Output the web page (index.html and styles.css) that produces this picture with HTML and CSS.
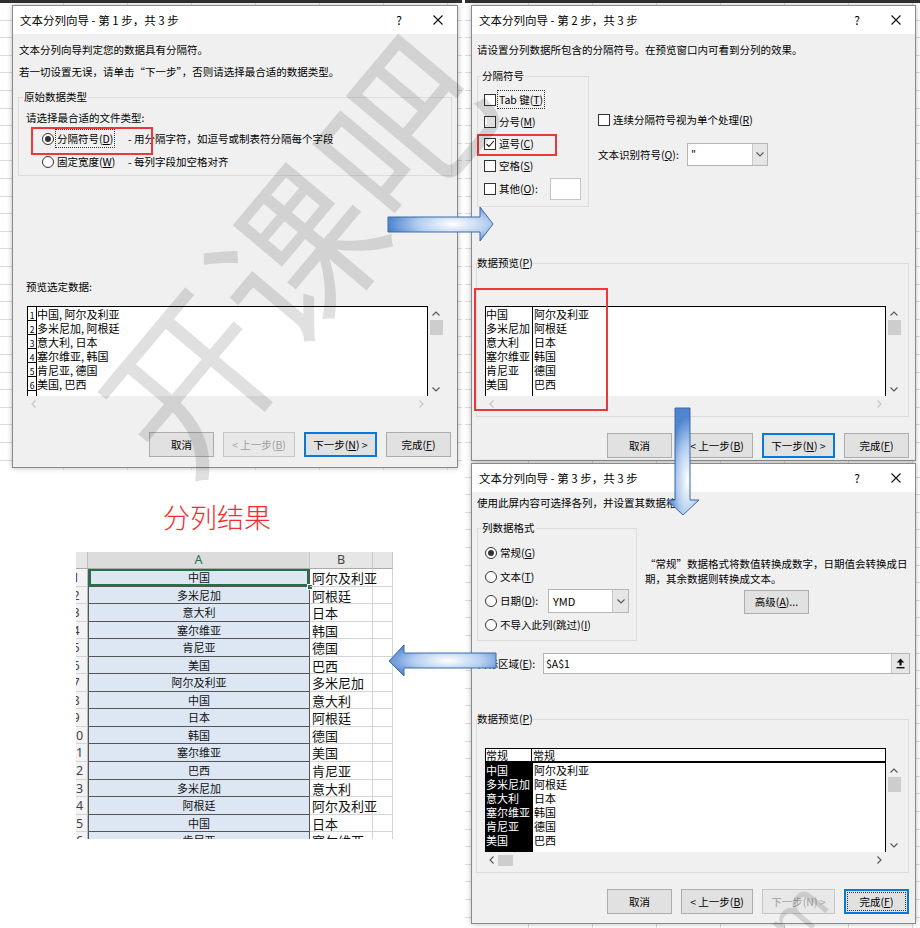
FILE: index.html
```html
<!DOCTYPE html>
<html lang="zh-CN">
<head>
<meta charset="utf-8">
<title>文本分列向导</title>
<link rel="stylesheet" href="styles.css">
</head>
<body>
<div class="canvas">
  <div class="shot shot1"></div>
  <div class="shot shot2"></div>
  <div class="shot shot3"></div>

  <!-- ============ Step 1 ============ -->
  <section class="dialog d1">
    <header class="titlebar">
      <span class="tt">文本分列向导 - 第 1 步，共 3 步</span>
      <span class="tb-q">?</span>
      <span class="tb-x"><svg width="10" height="10" viewBox="0 0 10 10"><path d="M0.5 0.5 L9.5 9.5 M9.5 0.5 L0.5 9.5" stroke="#111" stroke-width="1.1" fill="none"/></svg></span>
    </header>
    <div class="dbody">
      <p class="line l1">文本分列向导判定您的数据具有分隔符。</p>
      <p class="line l2">若一切设置无误，请单击“下一步”，否则请选择最合适的数据类型。</p>
      <fieldset class="grp g1">
        <legend>原始数据类型</legend>
        <div class="hint">请选择最合适的文件类型:</div>
        <div class="opt">
          <span class="radio on"></span>
          <span class="olbl"><span class="focus">分隔符号(<u>D</u>)</span></span>
          <span>- 用分隔字符，如逗号或制表符分隔每个字段</span>
        </div>
        <div class="opt">
          <span class="radio"></span>
          <span class="olbl">固定宽度(<u>W</u>)</span>
          <span>- 每列字段加空格对齐</span>
        </div>
      </fieldset>
      <div class="plabel">预览选定数据:</div>
      <div class="pv">
        <div class="pbox pb1">
          <div class="nrow"><span class="pn">1</span><span>中国, 阿尔及利亚</span></div>
          <div class="nrow"><span class="pn">2</span><span>多米尼加, 阿根廷</span></div>
          <div class="nrow"><span class="pn">3</span><span>意大利, 日本</span></div>
          <div class="nrow"><span class="pn">4</span><span>塞尔维亚, 韩国</span></div>
          <div class="nrow"><span class="pn">5</span><span>肯尼亚, 德国</span></div>
          <div class="nrow"><span class="pn">6</span><span>美国, 巴西</span></div>
          <div class="nrow"><span class="pn"></span><span></span></div>
        </div>
        <div class="vs">
          <span class="sa"><svg width="8" height="5" viewBox="0 0 8 5"><path d="M0.5 4.5 L4 1 L7.5 4.5" fill="none" stroke="#555" stroke-width="1.1"/></svg></span>
          <span class="thumb"></span>
          <span class="sa end"><svg width="8" height="5" viewBox="0 0 8 5"><path d="M0.5 0.5 L4 4 L7.5 0.5" fill="none" stroke="#555" stroke-width="1.1"/></svg></span>
        </div>
        <div class="hs light">
          <span class="ha"><svg width="5" height="8" viewBox="0 0 5 8"><path d="M4.5 0.5 L1 4 L4.5 7.5" fill="none" stroke="#c4c4c4" stroke-width="1.1"/></svg></span>
          <span class="ha end"><svg width="5" height="8" viewBox="0 0 5 8"><path d="M0.5 0.5 L4 4 L0.5 7.5" fill="none" stroke="#c4c4c4" stroke-width="1.1"/></svg></span>
        </div>
      </div>
      <div class="btns">
        <span class="btn w65">取消</span>
        <span class="btn w72 dis">&lt; 上一步(<u>B</u>)</span>
        <span class="btn w73 def">下一步(<u>N</u>) &gt;</span>
        <span class="btn w65">完成(<u>F</u>)</span>
      </div>
    </div>
  </section>

  <!-- ============ Step 2 ============ -->
  <section class="dialog d2">
    <header class="titlebar">
      <span class="tt">文本分列向导 - 第 2 步，共 3 步</span>
      <span class="tb-q">?</span>
      <span class="tb-x"><svg width="10" height="10" viewBox="0 0 10 10"><path d="M0.5 0.5 L9.5 9.5 M9.5 0.5 L0.5 9.5" stroke="#111" stroke-width="1.1" fill="none"/></svg></span>
    </header>
    <div class="dbody">
      <p class="line l1">请设置分列数据所包含的分隔符号。在预览窗口内可看到分列的效果。</p>
      <div class="row2">
        <fieldset class="grp g2">
          <legend>分隔符号</legend>
          <div class="chk"><span class="box"></span><span class="clbl"><span class="focus">Tab 键(<u>T</u>)</span></span></div>
          <div class="chk"><span class="box"></span><span class="clbl">分号(<u>M</u>)</span></div>
          <div class="chk"><span class="box"><svg width="10" height="10" viewBox="0 0 10 10"><path d="M1.5 5 L4 7.5 L8.8 2" fill="none" stroke="#111" stroke-width="1.1"/></svg></span><span class="clbl">逗号(<u>C</u>)</span></div>
          <div class="chk"><span class="box"></span><span class="clbl">空格(<u>S</u>)</span></div>
          <div class="chk other"><span class="box"></span><span class="clbl olb">其他(<u>O</u>):</span><span class="tbox"></span></div>
        </fieldset>
        <div class="rcol2">
          <div class="chk cons"><span class="box"></span><span class="clbl">连续分隔符号视为单个处理(<u>R</u>)</span></div>
          <div class="qrow">
            <span class="qlbl">文本识别符号(<u>Q</u>):</span>
            <span class="combo cq"><span class="cv">"</span><span class="cbtn"><svg width="8" height="5" viewBox="0 0 8 5"><path d="M0.5 0.5 L4 4 L7.5 0.5" fill="none" stroke="#555" stroke-width="1.1"/></svg></span></span>
          </div>
        </div>
      </div>
      <fieldset class="grp gpv gpv2">
        <legend>数据预览(<u>P</u>)</legend>
        <div class="pv">
          <div class="pbox pb2">
            <div class="pc1">中国<br>多米尼加<br>意大利<br>塞尔维亚<br>肯尼亚<br>美国</div>
            <div class="pc2">阿尔及利亚<br>阿根廷<br>日本<br>韩国<br>德国<br>巴西</div>
          </div>
          <div class="vs">
            <span class="sa"><svg width="8" height="5" viewBox="0 0 8 5"><path d="M0.5 4.5 L4 1 L7.5 4.5" fill="none" stroke="#555" stroke-width="1.1"/></svg></span>
            <span class="thumb"></span>
            <span class="sa end"><svg width="8" height="5" viewBox="0 0 8 5"><path d="M0.5 0.5 L4 4 L7.5 0.5" fill="none" stroke="#555" stroke-width="1.1"/></svg></span>
          </div>
          <div class="hs">
            <span class="ha"><svg width="5" height="8" viewBox="0 0 5 8"><path d="M4.5 0.5 L1 4 L4.5 7.5" fill="none" stroke="#c4c4c4" stroke-width="1.1"/></svg></span>
            <span class="ha end"><svg width="5" height="8" viewBox="0 0 5 8"><path d="M0.5 0.5 L4 4 L0.5 7.5" fill="none" stroke="#c4c4c4" stroke-width="1.1"/></svg></span>
          </div>
        </div>
      </fieldset>
      <div class="btns b2">
        <span class="btn w65">取消</span>
        <span class="btn w72">&lt; 上一步(<u>B</u>)</span>
        <span class="btn w73 def">下一步(<u>N</u>) &gt;</span>
        <span class="btn w65">完成(<u>F</u>)</span>
      </div>
    </div>
  </section>

  <!-- ============ Step 3 ============ -->
  <section class="dialog d3">
    <header class="titlebar">
      <span class="tt">文本分列向导 - 第 3 步，共 3 步</span>
      <span class="tb-q">?</span>
      <span class="tb-x"><svg width="10" height="10" viewBox="0 0 10 10"><path d="M0.5 0.5 L9.5 9.5 M9.5 0.5 L0.5 9.5" stroke="#111" stroke-width="1.1" fill="none"/></svg></span>
    </header>
    <div class="dbody">
      <p class="line l1">使用此屏内容可选择各列，并设置其数据格式。</p>
      <div class="row3">
        <fieldset class="grp g3">
          <legend>列数据格式</legend>
          <div class="ropt"><span class="radio on"></span><span class="rl">常规(<u>G</u>)</span></div>
          <div class="ropt"><span class="radio"></span><span class="rl">文本(<u>T</u>)</span></div>
          <div class="ropt"><span class="radio"></span><span class="rl dl">日期(<u>D</u>):</span>
            <span class="combo cd"><span class="cv">YMD</span><span class="cbtn"><svg width="8" height="5" viewBox="0 0 8 5"><path d="M0.5 0.5 L4 4 L7.5 0.5" fill="none" stroke="#555" stroke-width="1.1"/></svg></span></span>
          </div>
          <div class="ropt"><span class="radio"></span><span class="rl">不导入此列(跳过)(<u>I</u>)</span></div>
        </fieldset>
        <div class="rcol3">
          <p class="desc">“常规”数据格式将数值转换成数字，日期值会转换成日<br>期，其余数据则转换成文本。</p>
          <span class="btn adv">高级(<u>A</u>)...</span>
        </div>
      </div>
      <div class="target">
        <span class="tlbl">目标区域(<u>E</u>):</span>
        <span class="tinput"><span class="tv">$A$1</span><span class="tbtn"><svg width="9" height="11" viewBox="0 0 9 11"><path d="M4.5 0.5 L8.3 4.6 L5.6 4.6 L5.6 7.4 L3.4 7.4 L3.4 4.6 L0.7 4.6 Z" fill="#111"/><rect x="0.5" y="9" width="8" height="1.4" fill="#111"/></svg></span></span>
      </div>
      <fieldset class="grp gpv gpv3">
        <legend>数据预览(<u>P</u>)</legend>
        <div class="pv pv3">
          <div class="phead"><span class="ph1">常规</span><span class="ph2">常规</span></div>
          <div class="pblank"></div>
          <div class="pbox pb3">
            <div class="pc1 blk">中国<br>多米尼加<br>意大利<br>塞尔维亚<br>肯尼亚<br>美国</div>
            <div class="pc2">阿尔及利亚<br>阿根廷<br>日本<br>韩国<br>德国<br>巴西</div>
          </div>
          <div class="vs">
            <span class="sa"><svg width="8" height="5" viewBox="0 0 8 5"><path d="M0.5 4.5 L4 1 L7.5 4.5" fill="none" stroke="#555" stroke-width="1.1"/></svg></span>
            <span class="thumb t3"></span>
            <span class="sa end"><svg width="8" height="5" viewBox="0 0 8 5"><path d="M0.5 0.5 L4 4 L7.5 0.5" fill="none" stroke="#555" stroke-width="1.1"/></svg></span>
          </div>
          <div class="hs">
            <span class="ha"><svg width="5" height="8" viewBox="0 0 5 8"><path d="M4.5 0.5 L1 4 L4.5 7.5" fill="none" stroke="#555" stroke-width="1.1"/></svg></span>
            <span class="hthumb"></span>
            <span class="ha end"><svg width="5" height="8" viewBox="0 0 5 8"><path d="M0.5 0.5 L4 4 L0.5 7.5" fill="none" stroke="#555" stroke-width="1.1"/></svg></span>
          </div>
        </div>
      </fieldset>
      <div class="btns b3">
        <span class="btn w65">取消</span>
        <span class="btn w72">&lt; 上一步(<u>B</u>)</span>
        <span class="btn w73 dis">下一步(N) &gt;</span>
        <span class="btn w65 def focusbtn">完成(<u>F</u>)</span>
      </div>
    </div>
  </section>

  <!-- ============ Result sheet ============ -->
  <h2 class="result-title">分列结果</h2>
  <div class="sheet">
    <div class="corner"></div><div class="ch sel">A</div><div class="ch">B</div><div class="ch"></div>
    <div class="rh"><span>1</span></div><div class="ca act">中国<i class="handle"></i></div><div class="cbv">阿尔及利亚</div><div class="cc"></div>
    <div class="rh"><span>2</span></div><div class="ca">多米尼加</div><div class="cbv">阿根廷</div><div class="cc"></div>
    <div class="rh"><span>3</span></div><div class="ca">意大利</div><div class="cbv">日本</div><div class="cc"></div>
    <div class="rh"><span>4</span></div><div class="ca">塞尔维亚</div><div class="cbv">韩国</div><div class="cc"></div>
    <div class="rh"><span>5</span></div><div class="ca">肯尼亚</div><div class="cbv">德国</div><div class="cc"></div>
    <div class="rh"><span>6</span></div><div class="ca">美国</div><div class="cbv">巴西</div><div class="cc"></div>
    <div class="rh"><span>7</span></div><div class="ca">阿尔及利亚</div><div class="cbv">多米尼加</div><div class="cc"></div>
    <div class="rh"><span>8</span></div><div class="ca">中国</div><div class="cbv">意大利</div><div class="cc"></div>
    <div class="rh"><span>9</span></div><div class="ca">日本</div><div class="cbv">阿根廷</div><div class="cc"></div>
    <div class="rh"><span>10</span></div><div class="ca">韩国</div><div class="cbv">德国</div><div class="cc"></div>
    <div class="rh"><span>11</span></div><div class="ca">塞尔维亚</div><div class="cbv">美国</div><div class="cc"></div>
    <div class="rh"><span>12</span></div><div class="ca">巴西</div><div class="cbv">肯尼亚</div><div class="cc"></div>
    <div class="rh"><span>13</span></div><div class="ca">多米尼加</div><div class="cbv">意大利</div><div class="cc"></div>
    <div class="rh"><span>14</span></div><div class="ca">阿根廷</div><div class="cbv">阿尔及利亚</div><div class="cc"></div>
    <div class="rh"><span>15</span></div><div class="ca">中国</div><div class="cbv">日本</div><div class="cc"></div>
    <div class="rh"><span>16</span></div><div class="ca">肯尼亚</div><div class="cbv">塞尔维亚</div><div class="cc"></div>
  </div>

  <!-- ============ Annotations ============ -->
  <div class="redbox rb1"></div>
  <div class="redbox rb2"></div>
  <div class="redbox rb3"></div>

  <svg class="arrow ar-right" width="107" height="37" viewBox="0 0 107 37">
    <defs><radialGradient id="gr1" cx="0.62" cy="0.5" r="0.62"><stop offset="0" stop-color="#ffffff"/><stop offset="0.55" stop-color="#b3cdf0"/><stop offset="1" stop-color="#4f84cf"/></radialGradient></defs>
    <polygon points="1,11 93,11 93,1 106,18 93,35 93,26 1,26" fill="url(#gr1)" stroke="#3d6aa8" stroke-width="1"/>
  </svg>
  <svg class="arrow ar-down" width="34" height="110" viewBox="0 0 34 110">
    <defs><radialGradient id="gr2" cx="0.65" cy="0.68" r="0.6"><stop offset="0" stop-color="#ffffff"/><stop offset="0.55" stop-color="#b3cdf0"/><stop offset="1" stop-color="#4f84cf"/></radialGradient></defs>
    <polygon points="9,1 24,1 24,93 33,93 17,108 1,93 9,93" fill="url(#gr2)" stroke="#3d6aa8" stroke-width="1"/>
  </svg>
  <svg class="arrow ar-left" width="110" height="33" viewBox="0 0 110 33">
    <defs><radialGradient id="gr3" cx="0.55" cy="0.5" r="0.6"><stop offset="0" stop-color="#ffffff"/><stop offset="0.55" stop-color="#b3cdf0"/><stop offset="1" stop-color="#4f84cf"/></radialGradient></defs>
    <polygon points="1,17 16,1 16,9 108,9 108,24 16,24 16,32" fill="url(#gr3)" stroke="#3d6aa8" stroke-width="1"/>
  </svg>

  <div class="wm">开课吧</div>
  <div class="wm wm2">m</div>
</div>
</body>
</html>
```

FILE: styles.css
```css
:root {
  --ui: "Noto Sans CJK SC", "Noto Sans", sans-serif;
}
* { box-sizing: border-box; }
html, body { margin: 0; padding: 0; }
body { background: #fff; font-family: var(--ui); color: #000; }
u { text-decoration: underline; text-underline-offset: 1px; }

.canvas {
  position: relative;
  width: 920px;
  height: 928px;
  overflow: hidden;
  background: #fff;
}

/* screenshot backdrops (Excel grid behind each dialog) */
.shot {
  position: absolute;
  background-color: #fff;
  background-image:
    repeating-linear-gradient(to bottom, transparent 0, transparent 16.6px, #dcdcdc 16.6px, #dcdcdc 17.6px),
    repeating-linear-gradient(to right, transparent 0, transparent 63px, #dcdcdc 63px, #dcdcdc 64px);
}
.shot1 { left: 0; top: 0; width: 462px; height: 470px; border-top: 3px solid #2f2f2f; }
.shot2 { left: 465px; top: 0; width: 455px; height: 462px; border-top: 3px solid #2f2f2f; }
.shot3 { left: 465px; top: 460px; width: 455px; height: 468px; }

/* dialogs */
.dialog {
  position: absolute;
  display: flex;
  flex-direction: column;
  background: #f0f0f0;
  border: 1px solid #8a8a8a;
  box-shadow: 0 0 5px rgba(0, 0, 0, 0.28);
  font-size: 10.5px;
  line-height: 16px;
}
.d1 { left: 12px; top: 5px; width: 446px; height: 463px; }
.d2 { left: 471px; top: 5px; width: 445px; height: 456px; }
.d3 { left: 471px; top: 463px; width: 445px; height: 461px; }

.titlebar {
  flex: none;
  height: 28px;
  background: #fff;
  display: flex;
  align-items: center;
  padding-left: 7px;
  font-size: 11.5px;
}
.titlebar .tt { flex: 1; white-space: nowrap; }
.tb-q { width: 40px; text-align: center; font-size: 12px; }
.tb-x { width: 38px; display: flex; justify-content: center; align-items: center; }

.dbody { flex: 1; display: flex; flex-direction: column; }
.line { margin: 0; line-height: 20px; padding-left: 5px; white-space: nowrap; }
.d1 .line { padding-left: 6px; }
.d1 .l1 { margin-top: 6px; }
.d1 .l2 { margin-top: 2px; }
.d2 .l1 { margin-top: 6px; }
.d3 .l1 { margin-top: 1px; }

/* group boxes */
.grp { margin: 0; border: 1px solid #dcdcdc; min-width: 0; }
.grp legend { padding: 0 1px; line-height: 16px; font-size: 10.5px; }

.g1 { margin: 7px 0 0 5px; width: 434px; padding: 0 0 3px 4px; }
.hint { margin: 5px 0 0 3px; line-height: 16px; }
.opt { display: flex; align-items: center; height: 20px; margin-top: 3px; padding-left: 19px; white-space: nowrap; }
.olbl { width: 71px; margin-left: 3px; flex: none; }
.focus { outline: 1px dotted #333; outline-offset: 1px; }

.radio {
  width: 12px; height: 12px; flex: none;
  border: 1px solid #333; border-radius: 50%;
  background: #fff;
  display: flex; align-items: center; justify-content: center;
}
.radio.on::after { content: ""; width: 6px; height: 6px; border-radius: 50%; background: #333; }

.plabel { margin-top: 103px; padding-left: 13px; line-height: 16px; }

/* preview list with scroll bars */
.pv {
  display: grid;
  grid-template-columns: 401px 16px;
  grid-template-rows: 90px 16px;
}
.d1 .pv { margin: 11px 0 0 14px; }
.pbox {
  background: #fff;
  border: 1px solid #000;
  border-bottom: 0;
  overflow: hidden;
  font-size: 11px;
  line-height: 14px;
  white-space: nowrap;
}
.nrow { display: flex; height: 14px; }
.pn {
  width: 9px; flex: none;
  border-right: 1px solid #000; border-bottom: 1px solid #000;
  font-size: 8.5px; line-height: 9px;
  display: flex; align-items: flex-end; justify-content: center;
}
.vs { display: flex; flex-direction: column; }
.sa { height: 14px; display: flex; align-items: center; justify-content: center; }
.sa.end { margin-top: auto; }
.thumb { width: 13px; height: 15px; margin-left: 2px; background: #cdcdcd; }
.hs { display: flex; align-items: center; }
.ha { width: 13px; height: 16px; display: flex; align-items: center; justify-content: center; }
.ha.end { margin-left: auto; width: 14px; }
.hthumb { width: 15px; height: 11px; background: #cdcdcd; }

.pb2, .pb3 { display: flex; }
.pc1 { width: 47px; flex: none; border-right: 1px solid #000; }
.pc2 { padding-left: 1px; }
.blk { background: #000; color: #fff; }

/* buttons */
.btns { display: flex; justify-content: flex-end; gap: 9px; padding-right: 6px; margin-top: 20px; }
.b2, .b3 { margin-top: 16px; }
.btn {
  height: 25px;
  border: 1px solid #adadad;
  background: #e1e1e1;
  display: flex; align-items: center; justify-content: center;
  font-size: 10.5px;
  white-space: nowrap;
}
.w65 { width: 65px; }
.w72 { width: 72px; }
.w73 { width: 73px; }
.btn.def { border: 2px solid #0a78d7; }
.btn.dis { color: #a0a0a0; border-color: #c6c6c6; background: #e8e8e8; }
.btn.focusbtn { outline: 1px dotted #333; outline-offset: -4px; }

/* step 2 */
.row2 { display: flex; margin: 8px 0 0 5px; }
.g2 { width: 112px; padding: 0 0 6px 3px; flex: none; }
.chk { display: flex; align-items: center; height: 22px; white-space: nowrap; }
.g2 .chk:first-of-type { margin-top: 5px; }
.g2 .chk.other { margin-top: 1px; }
.box {
  width: 12px; height: 12px; flex: none;
  margin-left: 3px;
  border: 1px solid #333; background: #fff;
  display: flex; align-items: center; justify-content: center;
}
.clbl { margin-left: 3px; }
.olb { width: 51px; flex: none; }
.tbox { width: 31px; height: 22px; background: #fff; border: 1px solid #c4c4c4; flex: none; }
.rcol2 { margin-left: 9px; display: flex; flex-direction: column; }
.chk.cons { height: 20px; margin-top: 42px; }
.chk.cons .box { margin-left: 0; }
.qrow { display: flex; align-items: center; margin-top: 13px; height: 23px; white-space: nowrap; }
.qlbl { width: 89px; flex: none; }
.combo {
  display: flex; align-items: stretch;
  background: #fff; border: 1px solid #b5b5b5;
}
.cq { width: 81px; height: 23px; }
.cv { flex: 1; padding-left: 3px; line-height: 21px; }
.cbtn { width: 15px; background: #e6e6e6; border-left: 1px solid #c8c8c8; display: flex; align-items: center; justify-content: center; }

.gpv { margin: 0 0 0 4px; width: 433px; padding: 0 0 4px 0; }
.gpv legend { padding: 0; }
.gpv2 { margin-top: 48px; }
.gpv2 .pv { margin: 35px 0 0 8px; }

/* step 3 */
.row3 { display: flex; margin: 7px 0 0 5px; }
.g3 { width: 160px; padding: 0 0 3px 3px; flex: none; }
.ropt { display: flex; align-items: center; height: 24px; padding-left: 4px; white-space: nowrap; }
.g3 .ropt:first-of-type { margin-top: 5px; }
.rl { margin-left: 3px; }
.dl { width: 48px; flex: none; }
.cd { width: 81px; height: 24px; }
.cd .cv { padding-left: 4px; line-height: 22px; font-size: 11px; }
.cd .cbtn { width: 16px; }
.rcol3 { margin-left: 8px; width: 263px; display: flex; flex-direction: column; }
.desc { margin: 36px 0 0 0; line-height: 15px; white-space: nowrap; }
.adv { width: 65px; height: 24px; margin-top: 4px; align-self: center; }

.target { display: flex; align-items: center; height: 21px; margin-top: 12px; padding-left: 5px; white-space: nowrap; }
.tlbl { width: 66px; flex: none; }
.tinput { width: 367px; height: 21px; background: #fff; border: 1px solid #b5b5b5; display: flex; }
.tv { flex: 1; padding-left: 2px; line-height: 19px; font-size: 10.5px; }
.tbtn { width: 18px; background: #e6e6e6; border-left: 1px solid #c8c8c8; display: flex; align-items: center; justify-content: center; }

.gpv3 { margin-top: 37px; }
.pv3 { margin: 21px 0 0 8px; grid-template-rows: 15px 89px 16px; }
.phead {
  background: #fff;
  border: 1px solid #000; border-bottom: 2px solid #000;
  display: flex; font-size: 11px; line-height: 12px; overflow: hidden;
}
.ph1 { width: 46px; flex: none; border-right: 1px solid #000; }
.ph2 { padding-left: 1px; }
.pb3 { border-top: 0; }

/* result sheet */
.result-title {
  position: absolute;
  left: 163px; top: 502px;
  margin: 0;
  font-size: 27px; line-height: 30px;
  font-weight: 300;
  color: #f52c2c;
  font-family: var(--ui);
}
.sheet {
  position: absolute;
  left: 76px; top: 552px;
  width: 317px; height: 287px;
  overflow: hidden;
  display: grid;
  grid-template-columns: 12px 222px 63px 20px;
  grid-template-rows: 17px;
  grid-auto-rows: 17.56px;
  background: #fff;
  font-family: var(--ui);
}
.corner { background: #e6e6e6; border-right: 1px solid #bdbdbd; border-bottom: 1px solid #ababab; }
.ch {
  background: #e6e6e6;
  border-right: 1px solid #c8c8c8; border-bottom: 1px solid #ababab;
  font-size: 12.5px; line-height: 16px; text-align: center; color: #444;
  font-family: "Noto Sans", var(--ui);
}
.ch.sel { color: #217346; background: #dcdcdc; }
.rh {
  background: #f3f3f3;
  border-right: 1px solid #bdbdbd; border-bottom: 1px solid #d4d4d4;
  overflow: hidden;
  font-size: 12.5px; color: #444;
  font-family: "Noto Sans", var(--ui);
}
.rh span { display: block; width: 24px; margin-left: -12px; text-align: center; line-height: 17px; }
.ca {
  background: #dce7f3;
  border-left: 1px solid #555; border-right: 1px solid #555; border-bottom: 1px solid #555;
  font-size: 11px; line-height: 16px; text-align: center; color: #111;
}
.ca.act { position: relative; box-shadow: inset 0 0 0 2px #217346; }
.handle {
  position: absolute; right: -4px; bottom: -4px;
  width: 6px; height: 6px;
  background: #217346; border: 1px solid #fff;
}
.cbv {
  position: relative;
  z-index: 1;
  border-right: 1px solid #d4d4d4; border-bottom: 1px solid #d4d4d4;
  font-size: 13px; line-height: 17px; padding-left: 2px;
  white-space: nowrap; color: #111;
}
.cc { border-right: 1px solid #d4d4d4; border-bottom: 1px solid #d4d4d4; }

/* annotations */
.redbox { position: absolute; border: 2px solid #ee3838; }
.rb1 { left: 31px; top: 127px; width: 122px; height: 28px; }
.rb2 { left: 477px; top: 134px; width: 80px; height: 22px; }
.rb3 { left: 474px; top: 288px; width: 134px; height: 123px; }

.arrow { position: absolute; }
.ar-right { left: 387px; top: 206px; }
.ar-down { left: 666px; top: 407px; }
.ar-left { left: 388px; top: 644px; }

.wm {
  position: absolute;
  left: 290px; top: 250px;
  transform: translate(-50%, -50%) rotate(-50deg);
  font-size: 165px; line-height: 1;
  color: rgba(0, 0, 0, 0.12);
  white-space: nowrap;
  pointer-events: none;
  font-family: "Noto Sans CJK SC", sans-serif;
  font-weight: 400;
}
.wm2 { left: 795px; top: 912px; font-size: 62px; font-family: "Noto Sans", sans-serif; }
```
